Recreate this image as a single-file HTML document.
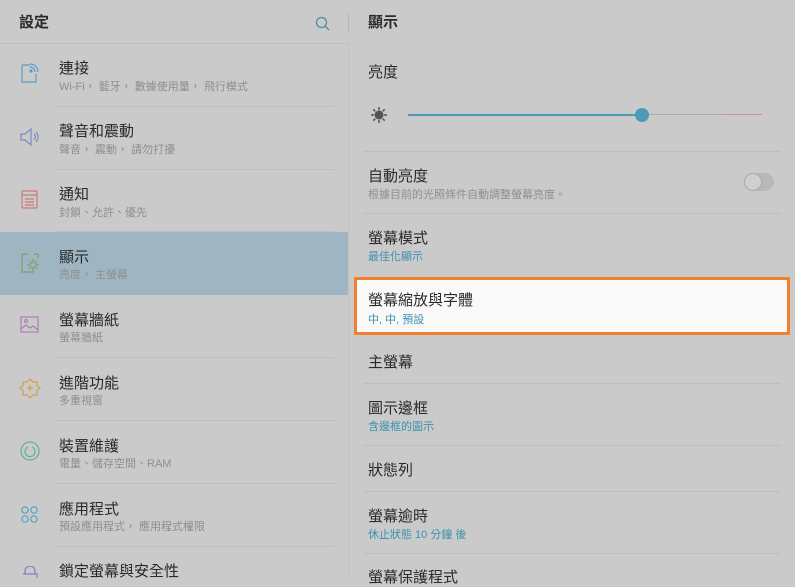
<!DOCTYPE html>
<html><head><meta charset="utf-8"><style>
*{margin:0;padding:0;box-sizing:border-box}
body{width:795px;height:578px;overflow:hidden;background:#cacaca;font-family:"Liberation Sans","Noto Sans CJK TC",sans-serif;position:relative;color:#2a2a2a}
.a{position:absolute}
.t{font-size:15px;color:#2a2a2a;white-space:nowrap}
.s{font-size:11px;color:#8e8e8e;white-space:nowrap}
.b{font-size:11px;color:#3d8fb0;white-space:nowrap}
.hl{position:absolute;left:55px;width:280px;height:1px;background:#bdbdbd}
.hr{position:absolute;left:363px;width:418px;height:1px;background:#bdbdbd}
</style></head><body>
<div class="a t" style="left:19px;top:11px;font-weight:bold">設定</div>
<svg class="a" style="left:315px;top:16px" width="16" height="16" viewBox="0 0 16 16"><circle cx="6.5" cy="6.5" r="5" fill="none" stroke="#4a90a8" stroke-width="1.3"/><line x1="10.2" y1="10.2" x2="14" y2="14" stroke="#4a90a8" stroke-width="1.3"/></svg>
<div class="a" style="left:348px;top:12px;width:1px;height:21px;background:#b8b8b8"></div>
<div class="a t" style="left:368px;top:11px;font-weight:bold">顯示</div>
<div class="a" style="left:0;top:43px;width:348px;height:1px;background:#c0c0c0"></div>
<div class="a" style="left:348px;top:43px;width:1px;height:535px;background:#c0c0c0"></div>
<div class="a" style="left:0;top:232px;width:348px;height:63px;background:#9fb6c2"></div>

<div class="a t" style="left:59px;top:57px">連接</div><div class="a s" style="left:59px;top:78px">Wi-Fi， 藍牙， 數據使用量， 飛行模式</div>
<div class="hl" style="top:106px"></div>
<div class="a t" style="left:59px;top:120px">聲音和震動</div><div class="a s" style="left:59px;top:141px">聲音， 震動， 請勿打擾</div>
<div class="hl" style="top:169px"></div>
<div class="a t" style="left:59px;top:183px">通知</div><div class="a s" style="left:59px;top:204px">封鎖、允許、優先</div>
<div class="hl" style="top:231px"></div>
<div class="a t" style="left:59px;top:246px">顯示</div><div class="a s" style="left:59px;top:266px">亮度， 主螢幕</div>
<div class="a t" style="left:59px;top:309px">螢幕牆紙</div><div class="a s" style="left:59px;top:329px">螢幕牆紙</div>
<div class="hl" style="top:357px"></div>
<div class="a t" style="left:59px;top:372px">進階功能</div><div class="a s" style="left:59px;top:392px">多重視窗</div>
<div class="hl" style="top:420px"></div>
<div class="a t" style="left:59px;top:435px">裝置維護</div><div class="a s" style="left:59px;top:455px">電量、儲存空間、RAM</div>
<div class="hl" style="top:483px"></div>
<div class="a t" style="left:59px;top:498px">應用程式</div><div class="a s" style="left:59px;top:518px">預設應用程式， 應用程式權限</div>
<div class="hl" style="top:546px"></div>
<div class="a t" style="left:59px;top:560px">鎖定螢幕與安全性</div>

<svg class="a" style="left:18px;top:62px" width="24" height="24" viewBox="0 0 24 24" fill="none" stroke="#5a9ec0" stroke-width="1.2"><path d="M4 3h8M4 3v17h14v-8"/><path d="M12 5a5 5 0 0 1 5 5M12 2a8 8 0 0 1 8 8"/><circle cx="13" cy="9" r="1" fill="#5a9ec0"/></svg>
<svg class="a" style="left:19px;top:127px" width="22" height="20" viewBox="0 0 22 20" fill="none" stroke="#7a8cc0" stroke-width="1.2"><path d="M2 7h4l6-5v16l-6-5H2z"/><path d="M15 7a4 4 0 0 1 0 6M17 5a7 7 0 0 1 0 10"/></svg>
<svg class="a" style="left:21px;top:190px" width="18" height="20" viewBox="0 0 18 20" fill="none" stroke="#d07a70" stroke-width="1.2"><rect x="1" y="1" width="15" height="17" rx="1"/><path d="M1 5h15M4 9h9M4 12h9M4 15h9"/></svg>
<svg class="a" style="left:20px;top:252px" width="22" height="22" viewBox="0 0 22 22" fill="none" stroke="#7aa070" stroke-width="1.2"><path d="M8 2H2v18h12M14 2h4v4"/><circle cx="13" cy="13" r="3"/><path d="M13 7v2M13 17v2M7 13h2M17 13h2M9 9l1 1M16 16l1 1M9 17l1-1M16 10l1-1"/></svg>
<svg class="a" style="left:20px;top:316px" width="20" height="18" viewBox="0 0 20 18" fill="none" stroke="#b07ab8" stroke-width="1.2"><rect x="1" y="1" width="17" height="15"/><circle cx="6" cy="5" r="1.5"/><path d="M1 13l5-4 4 3 3-2 5 4"/></svg>
<svg class="a" style="left:19px;top:377px" width="22" height="22" viewBox="0 0 22 22" fill="none" stroke="#d0a050" stroke-width="1.2"><path d="M11 2l3 3h4v4l3 2-3 3v4h-4l-3 3-3-3H4v-4l-3-3 3-2V5h4z"/><path d="M11 8v6M8 11h6"/></svg>
<svg class="a" style="left:19px;top:440px" width="22" height="22" viewBox="0 0 22 22" fill="none" stroke="#60b090" stroke-width="1.2"><circle cx="11" cy="11" r="9"/><path d="M9 7a5 5 0 1 0 4 0"/></svg>
<svg class="a" style="left:20px;top:505px" width="20" height="20" viewBox="0 0 20 20" fill="none" stroke="#5a9ec0" stroke-width="1.2"><circle cx="5" cy="5" r="3.2"/><circle cx="14" cy="5" r="3.2"/><circle cx="5" cy="14" r="3.2"/><circle cx="14" cy="14" r="3.2"/></svg>
<svg class="a" style="left:20px;top:566px" width="20" height="12" viewBox="0 0 20 12" fill="none" stroke="#8a7ac0" stroke-width="1.2"><path d="M5 8V5a5 5 0 0 1 10 0v3M3 8h14v4"/></svg>

<div class="a t" style="left:368px;top:61px">亮度</div>
<svg class="a" style="left:370px;top:106px" width="18" height="18" viewBox="0 0 18 18"><circle cx="9" cy="9" r="4.5" fill="#555"/><g stroke="#555" stroke-width="1.5"><path d="M9 1v3M9 14v3M1 9h3M14 9h3M3.3 3.3l2 2M12.7 12.7l2 2M3.3 14.7l2-2M12.7 5.3l2-2"/></g></svg>
<div class="a" style="left:408px;top:114px;width:234px;height:2px;background:#4a9ab8"></div>
<div class="a" style="left:642px;top:114px;width:84px;height:1px;background:#aaa"></div>
<div class="a" style="left:726px;top:114px;width:36px;height:1px;background:#d09090"></div>
<div class="a" style="left:635px;top:108px;width:14px;height:14px;border-radius:50%;background:#4a9ab8"></div>
<div class="hr" style="top:151px"></div>
<div class="a t" style="left:368px;top:165px">自動亮度</div><div class="a s" style="left:368px;top:186px">根據目前的光照條件自動調整螢幕亮度。</div>
<div class="a" style="left:744px;top:173px;width:30px;height:18px;border-radius:9px;background:#b8b8b8"></div>
<div class="a" style="left:744px;top:173px;width:18px;height:18px;border-radius:50%;background:#cfcfcf;border:1px solid #aaa"></div>
<div class="hr" style="top:213px"></div>
<div class="a t" style="left:368px;top:227px">螢幕模式</div><div class="b a" style="left:368px;top:248px">最佳化顯示</div>
<div class="a" style="left:354px;top:277px;width:436px;height:58px;background:#f9f9f9;border:3px solid #f08030"></div>
<div class="a t" style="left:368px;top:289px">螢幕縮放與字體</div><div class="b a" style="left:368px;top:311px">中, 中, 預設</div>
<div class="a t" style="left:368px;top:351px">主螢幕</div>
<div class="hr" style="top:383px"></div>
<div class="a t" style="left:368px;top:397px">圖示邊框</div><div class="b a" style="left:368px;top:418px">含邊框的圖示</div>
<div class="hr" style="top:445px"></div>
<div class="a t" style="left:368px;top:459px">狀態列</div>
<div class="hr" style="top:491px"></div>
<div class="a t" style="left:368px;top:505px">螢幕逾時</div><div class="b a" style="left:368px;top:526px">休止狀態 10 分鐘 後</div>
<div class="hr" style="top:553px"></div>
<div class="a t" style="left:368px;top:566px">螢幕保護程式</div>
</body></html>
